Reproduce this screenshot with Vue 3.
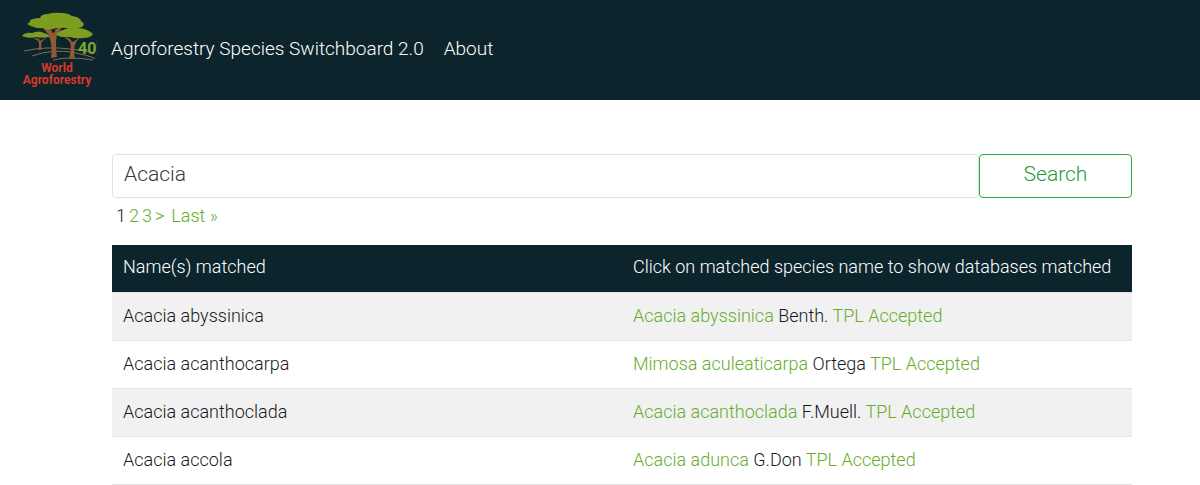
<template>
  <div class="page">
    <!-- Top navigation -->
    <header class="navbar">
      <a class="brand" href="#" aria-label="World Agroforestry">
        <svg class="logo" viewBox="0 0 100 100" aria-hidden="true">
          <!-- Ground lines -->
          <g fill="none" stroke="#a08258" stroke-width="0.8">
            <path d="M14 51 Q36 46 60 49 T80 52" />
            <path d="M22 56 Q44 48 66 53 T84 59" />
            <path d="M43 60 Q58 56 83 60" />
          </g>
          <!-- Trunks -->
          <g fill="#8f5a35">
            <path d="M41 58 Q43 45 38 34 L31 26 L41 30 L43 33 L46 29 L55 24 L47 34 Q45 45 47 57 Z" />
            <path d="M28.500 50 Q30 44 28 41 L22 37 L29 39 L30 41 L37 37 L31.500 42 L31 50 Z" />
            <path d="M59 59 Q62 49 60 42 L54 37 L60 39 L63 42 L70 37 L66 42 Q63 49 65 59 Z" />
          </g>
          <circle cx="43.500" cy="31" r="1.500" fill="#0c252c" />
          <circle cx="62.500" cy="40" r="1.500" fill="#0c252c" />
          <!-- Canopies -->
          <g fill="#7c9d20">
            <path d="M17 24 Q21 22 20 20 Q24 18 30 18 Q31 14 38 14 Q43 12 52 13 Q58 13 62 16 Q70 17 71 21 Q76 24 72 27 Q66 29 57 28 Q48 27 43 29 Q38 31 33 28 Q25 29 17 24 Z" />
            <path d="M12 36 Q15 32 22 33 Q29 30 34 33 Q39 34 39 37 Q31 38 26 37 Q18 39 12 36 Z" />
            <path d="M46 35 Q48 31 53 30 Q61 26 69 28 Q78 29 83 34 Q81 38 73 38 Q66 39 60 37 Q52 38 46 35 Z" />
          </g>
          <text class="logo-years" x="68" y="54" fill="#7fa831">40</text>
          <path d="M87 41 V54" stroke="#2b4a2c" stroke-width="1" stroke-dasharray="1 1" />
          <text class="logo-name" x="47" y="72" text-anchor="middle" fill="#d9382c">World</text>
          <text class="logo-name" x="47" y="84" text-anchor="middle" fill="#d9382c">Agroforestry</text>
        </svg>
      </a>
      <nav class="nav-links">
        <a v-for="link in navLinks" :key="link" href="#">{{ link }}</a>
      </nav>
    </header>

    <main class="content">
      <!-- Search -->
      <form class="search" @submit.prevent>
        <input v-model="query" type="text" aria-label="Species name" />
        <button type="submit">Search</button>
      </form>

      <!-- Pagination -->
      <nav class="pagination" aria-label="Result pages">
        <span>1</span>
        <a href="#">2</a>
        <a href="#">3</a>
        <a href="#">&gt;</a>
        <a class="last" href="#">Last »</a>
      </nav>

      <!-- Results -->
      <table class="results">
        <thead>
          <tr>
            <th>Name(s) matched</th>
            <th>Click on matched species name to show databases matched</th>
          </tr>
        </thead>
        <tbody>
          <tr v-for="row in results" :key="row.name">
            <td>{{ row.name }}</td>
            <td>
              <a href="#">{{ row.species }}</a> {{ row.author }} <a href="#">TPL Accepted</a>
            </td>
          </tr>
        </tbody>
      </table>
    </main>
  </div>
</template>

<script setup>
import { ref } from 'vue';

const query = ref('Acacia');

const navLinks = ['Agroforestry Species Switchboard 2.0', 'About'];

const results = [
  { name: 'Acacia abyssinica', species: 'Acacia abyssinica', author: 'Benth.' },
  { name: 'Acacia acanthocarpa', species: 'Mimosa aculeaticarpa', author: 'Ortega' },
  { name: 'Acacia acanthoclada', species: 'Acacia acanthoclada', author: 'F.Muell.' },
  { name: 'Acacia accola', species: 'Acacia adunca', author: 'G.Don' },
];
</script>

<style>
body { background-color: #fff; }
</style>

<style scoped>
.page {
  color: #16191c;
  font-family: Roboto, 'Liberation Sans', sans-serif;
  font-size: 18px;
  font-weight: 300;
  line-height: 24px;
}

a { color: #66ad2b; text-decoration: none; }

/* Navbar */
.navbar {
  display: flex;
  align-items: center;
  height: 100px;
  padding-left: 10px;
  background-color: #0c252c;
}

.logo { display: block; width: 100px; height: 100px; }
.logo-years { font-size: 16px; font-weight: 700; }
.logo-name { font-size: 12px; font-weight: 700; }

.nav-links { display: flex; gap: 20px; padding: 0 1px 2px; font-size: 19px; }
.nav-links a { color: #fff; }

/* Content */
.content { padding: 54px 68px 0 112px; }

.search { display: flex; }
.search input,
.search button {
  box-sizing: border-box;
  height: 44px;
  margin: 0;
  border: 1px solid #dfe1e3;
  border-radius: 4px;
  background-color: #fff;
  font: inherit;
  font-size: 21px;
}
.search input {
  flex: 1;
  min-width: 0;
  padding: 0 11px 4px;
  color: #343a40;
}
.search button {
  flex: 0 0 15%;
  padding: 0 0 4px;
  border-color: #28a745;
  color: #1f9c3c;
  cursor: pointer;
}

.pagination {
  display: flex;
  gap: 3px;
  padding: 6px 4px 17px;
}
.pagination .last { margin-left: 4px; }

/* Results table */
.results {
  width: 100%;
  table-layout: fixed;
  border-bottom: 1px solid #e1e3e5;
  border-collapse: separate;
  border-spacing: 0;
}
.results th,
.results td {
  padding: 11px 11px 12px;
  text-align: left;
}
.results th {
  padding: 10px 11px 13px;
  background-color: #0c252c;
  color: #fff;
  font-weight: inherit;
}
.results td { border-top: 1px solid #e1e3e5; }
.results tbody tr:nth-child(odd) { background-color: #f1f1f2; }
</style>
